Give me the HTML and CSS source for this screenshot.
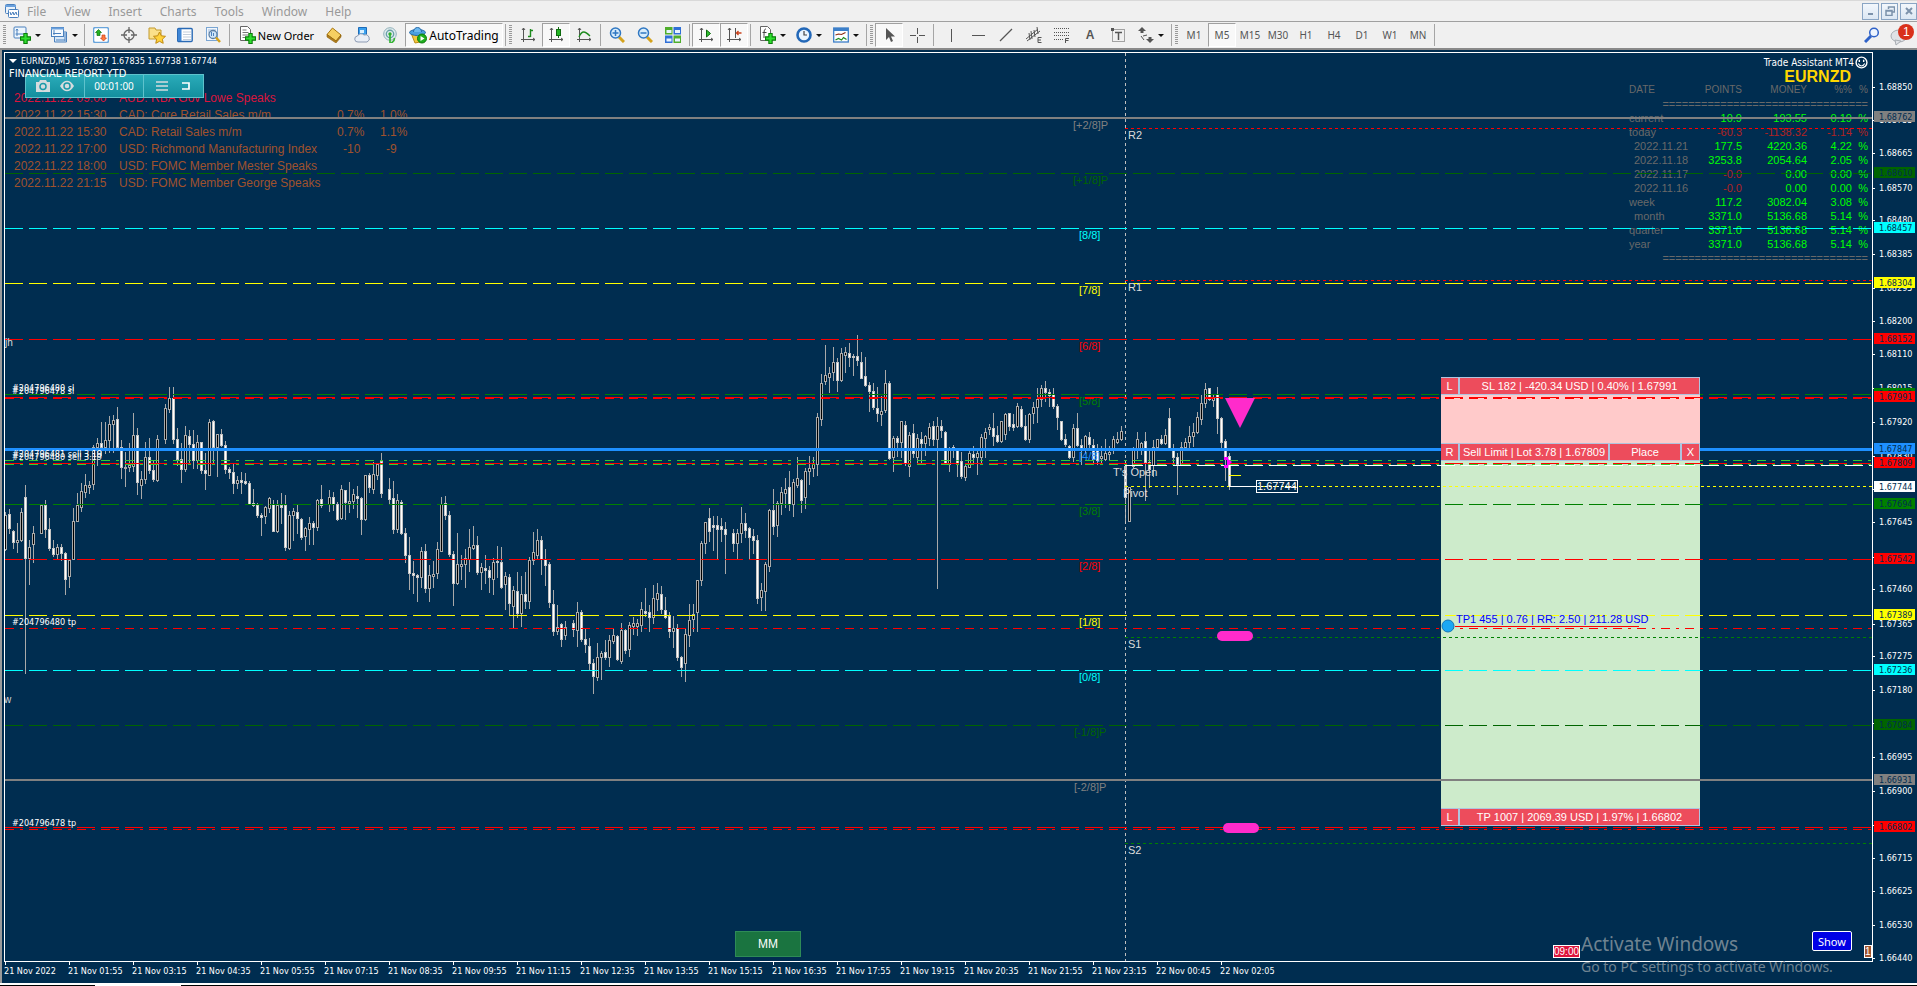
FILE: index.html
```html
<!DOCTYPE html>
<html lang="en">
<head>
<meta charset="utf-8">
<title>EURNZD,M5</title>
<link rel="stylesheet" href="styles.css">
</head>
<body>
<svg class="defs" aria-hidden="true">
  <symbol id="plus" viewBox="0 0 10 10"><path d="M3.5.5h3v3h3v3h-3v3h-3v-3h-3v-3h3z" fill="#2fe02f" stroke="#0a7d0a"/></symbol>
  <symbol id="i-app" viewBox="0 0 16 16"><rect x="1.500" y="1.500" width="10" height="9" rx="1" fill="#e9f2fb" stroke="#4a80bd"/><path d="M1 3h11" stroke="#6aa0dc" stroke-width="2"/><rect x="4.500" y="6.500" width="10" height="8" rx="1" fill="#fff" stroke="#4a80bd"/><path d="M6 9l1 3 2-3 1 3 2-3 1 3" fill="none" stroke="#4a80bd"/></symbol>
  <symbol id="i-newchart" viewBox="0 0 18 18"><rect x="1" y="1" width="12" height="11" rx="1" fill="#eef6fd" stroke="#4a80bd"/><path d="M4 3v7M2.500 8h8M3 4.500l1-1.500 1 1.500" fill="none" stroke="#4a80bd"/><use href="#plus" x="7" y="7" width="11" height="11"/></symbol>
  <symbol id="i-profile" viewBox="0 0 18 18"><path d="M4.500 6h12v10h-12z" fill="#d8e8f8" stroke="#4a80bd"/><path d="M15 7v8M6 14h9" stroke="#4a80bd"/><rect x="1.500" y="1.500" width="12" height="9" fill="#f5faff" stroke="#4a80bd"/><path d="M1 2.500h13" stroke="#6aa0dc" stroke-width="2"/><path d="M4 4v5M3 7.500h8" stroke="#4a80bd"/></symbol>
  <symbol id="i-market" viewBox="0 0 16 16"><rect x=".5" y=".5" width="15" height="15" rx="2" fill="#fff" stroke="#69a5dc" stroke-width="1.500"/><path d="M5.500 2.500l3 3H7v3H4v-3H2.500z" fill="#23b223" stroke="#0f730f" stroke-width=".7"/><path d="M10.500 14l3-3H12V8H9v3H7.500z" fill="#ff7a3c" stroke="#c9401a" stroke-width=".7"/></symbol>
  <symbol id="i-target" viewBox="0 0 16 16"><circle cx="8" cy="8" r="5" fill="none" stroke="#666" stroke-width="1.300"/><path d="M8 0v6M8 10v6M0 8h6M10 8h6" stroke="#666" stroke-width="1.300"/></symbol>
  <symbol id="i-folder" viewBox="0 0 18 18"><path d="M1 2h6l1 2h5v9H1z" fill="#fbe08a" stroke="#c29a2e"/><path d="M11.500 6l1.800 3.800 4.200.5-3.100 2.900.8 4.100-3.700-2-3.700 2 .8-4.100-3.100-2.900 4.200-.5z" fill="#ffd23c" stroke="#c08a12"/></symbol>
  <symbol id="i-list" viewBox="0 0 16 16"><rect x=".7" y="1.500" width="14.500" height="13" rx="1" fill="#fff" stroke="#2a6ab5" stroke-width="1.400"/><path d="M1 2h3.500v12H1z" fill="#3f86d6"/><path d="M6 5h8M6 7.500h8M6 10h8M6 12.500h8" stroke="#c3cedb"/></symbol>
  <symbol id="i-tester" viewBox="0 0 16 16"><rect x="1.500" y=".5" width="11" height="13" fill="#f2f7fc" stroke="#7aa5d2"/><path d="M3 3h8M3 5h8" stroke="#9dbbe0"/><circle cx="8" cy="7.500" r="4" fill="#cfe6fa" stroke="#5c7fa5" stroke-width="1.300"/><path d="M6.500 5v4M8.500 6v3" stroke="#4a80bd"/><path d="M11 10.500l4 4.500" stroke="#d4a21c" stroke-width="2.500"/></symbol>
  <symbol id="i-order" viewBox="0 0 18 18"><path d="M2.500.5h7l3 3v11h-10z" fill="#fff" stroke="#666"/><path d="M4.500 4h4M4.500 6.500h6M4.500 9h6M4.500 11.500h3" stroke="#777"/><use href="#plus" x="7" y="7" width="11" height="11"/></symbol>
  <symbol id="i-book" viewBox="0 0 16 16"><path d="M1 7.500L6.500 1 15 8l-5 6z" fill="#f6cf62" stroke="#a8760f"/><path d="M1 7.500v2.500l9 6 5-6V8l-5 6z" fill="#b37f1a" stroke="#8b5f0d" stroke-width=".6"/></symbol>
  <symbol id="i-cloud" viewBox="0 0 16 16"><path d="M4.500.5h8v8h-8z" fill="#3aa0ee" stroke="#1d6bb8"/><path d="M6 3h4v3H6z" fill="#d7efff"/><path d="M4 15a3 3 0 0 1-.5-6A4 4 0 0 1 10 8a3.500 3.500 0 0 1 3 7z" fill="#e9eef6" stroke="#8d9bb3"/></symbol>
  <symbol id="i-signal" viewBox="0 0 16 16"><circle cx="8" cy="7" r="6.300" fill="#e2ecef" stroke="#8fb0b9"/><circle cx="8" cy="7" r="3.700" fill="none" stroke="#69a0a8" stroke-width="1.400"/><circle cx="8" cy="7" r="1.700" fill="#2fae2f"/><path d="M8 8v8c3-.5 4.500-3 4.500-5" fill="none" stroke="#37b337" stroke-width="1.700"/></symbol>
  <symbol id="i-auto" viewBox="0 0 18 18"><path d="M2 7h13l-4 9-5 1z" fill="#f2c63c" stroke="#b98a16"/><ellipse cx="8.500" cy="6.500" rx="8" ry="3" fill="#4a9fe0" stroke="#2369a8"/><path d="M4.500 6c0-6 8-6 8 0" fill="#6bb8f0" stroke="#2369a8"/><circle cx="13" cy="12.500" r="4.500" fill="#1fae1f" stroke="#0b7a0b"/><path d="M11.500 10v5l4-2.500z" fill="#fff"/></symbol>
  <symbol id="i-bars" viewBox="0 0 16 16"><path d="M3.500 1v14M1 12.500h14M2 3l1.500-2L5 3M13 11l2 1.500-2 1.500" fill="none" stroke="#555"/><path d="M10.500 2v8M8 9.500h2.500M10.500 3.500H13" stroke="#1d8a1d" stroke-width="1.400"/></symbol>
  <symbol id="i-candles" viewBox="0 0 16 16"><path d="M3.500 1v14M1 12.500h14M2 3l1.500-2L5 3M13 11l2 1.500-2 1.500" fill="none" stroke="#555"/><path d="M10.500 0v11" stroke="#0e6a0e"/><rect x="8.500" y="2.500" width="4" height="6" fill="#22b422" stroke="#0e6a0e"/></symbol>
  <symbol id="i-line" viewBox="0 0 16 16"><path d="M3.500 1v14M1 12.500h14M2 3l1.500-2L5 3M13 11l2 1.500-2 1.500" fill="none" stroke="#555"/><path d="M3 10c3-7 6-6 11-1" fill="none" stroke="#1d8a1d" stroke-width="1.300"/></symbol>
  <symbol id="i-zin" viewBox="0 0 16 16"><path d="M10 10l5 5" stroke="#d4a21c" stroke-width="3"/><circle cx="6.500" cy="6" r="5" fill="#d9edfb" stroke="#2f77c2" stroke-width="1.500"/><path d="M6.500 3v6M3.500 6h6" stroke="#2f77c2" stroke-width="1.500"/></symbol>
  <symbol id="i-zout" viewBox="0 0 16 16"><path d="M10 10l5 5" stroke="#d4a21c" stroke-width="3"/><circle cx="6.500" cy="6" r="5" fill="#d9edfb" stroke="#2f77c2" stroke-width="1.500"/><path d="M3.500 6h6" stroke="#2f77c2" stroke-width="1.500"/></symbol>
  <symbol id="i-tiles" viewBox="0 0 16 16"><path d="M0 0h7.500v7.500H0zM8.500 8.500H16V16H8.500z" fill="#4fae2c"/><path d="M8.500 0H16v7.500H8.500zM0 8.500h7.500V16H0z" fill="#2f6fd6"/><path d="M1.500 3h5v3h-5zM10 3h5v3h-5zM1.500 11.500h5v3h-5zM10 11.500h5v3h-5z" fill="#e8f3ff"/></symbol>
  <symbol id="i-scroll" viewBox="0 0 16 16"><path d="M3.500 1v14M1 12.500h14M2 3l1.500-2L5 3M13 11l2 1.500-2 1.500" fill="none" stroke="#555"/><path d="M8.500 3v7l4-3.500z" fill="#2fc02f" stroke="#0e6a0e"/></symbol>
  <symbol id="i-shift" viewBox="0 0 16 16"><path d="M3.500 1v14M1 12.500h14M2 3l1.500-2L5 3M13 11l2 1.500-2 1.500M9.500 1v10" fill="none" stroke="#555"/><path d="M10.500 6h5M12.500 4l-2 2 2 2" fill="none" stroke="#c9401a" stroke-width="1.300"/></symbol>
  <symbol id="i-indic" viewBox="0 0 18 18"><path d="M2.500.5h7l3 3v11h-10z" fill="#fff" stroke="#666"/><path d="M8 3c-2 0-2 2-2 9M4.500 6.500h4" fill="none" stroke="#444"/><use href="#plus" x="7" y="7" width="11" height="11"/></symbol>
  <symbol id="i-clock" viewBox="0 0 16 16"><circle cx="8" cy="8" r="6.500" fill="#eaf5ff" stroke="#2368b8" stroke-width="2.600"/><path d="M8 4v4h3" fill="none" stroke="#444" stroke-width="1.200"/></symbol>
  <symbol id="i-templ" viewBox="0 0 16 16"><rect x=".7" y="1" width="14.600" height="14" fill="#fff" stroke="#3c7fc9" stroke-width="1.300"/><path d="M1 2.500h14" stroke="#3c7fc9" stroke-width="3"/><path d="M2.500 8l3-1 3 .500 4-2" fill="none" stroke="#8a2b12" stroke-width="1.200"/><path d="M2.500 13l3-1.500 3 1.500 2-2.500 3 2" fill="none" stroke="#1d8a1d" stroke-width="1.200"/></symbol>
  <symbol id="i-cursor" viewBox="0 0 16 16"><path d="M5 1v12l3-3 2 5 2-1-2-4.500h4z" fill="#555"/></symbol>
  <symbol id="i-cross" viewBox="0 0 16 16"><path d="M8.500 1v6M8.500 10v6M1 8.500h6M10 8.500h6" stroke="#555"/></symbol>
  <symbol id="i-v" viewBox="0 0 16 16"><path d="M9.500 2v13" stroke="#555"/></symbol>
  <symbol id="i-h" viewBox="0 0 16 16"><path d="M2 8.500h13" stroke="#555"/></symbol>
  <symbol id="i-trend" viewBox="0 0 16 16"><path d="M2 14L14 2" stroke="#555" stroke-width="1.200"/></symbol>
  <symbol id="i-chan" viewBox="0 0 16 16"><path d="M0 12L12 2M1 14L14 4M3 6l1 7M5 4l1 8M8 3l1 7M11 0l1 7" stroke="#555"/><path d="M15.500 10.500h-3.500v5h3.500M12 13h3" fill="none" stroke="#555"/></symbol>
  <symbol id="i-fibo" viewBox="0 0 16 16"><path d="M0 1.500h15M0 5.500h15M0 8.500h15M0 12.500h9" stroke="#555" stroke-dasharray="1 1"/><path d="M11.500 16v-4.500H15M11.500 13.500h3" fill="none" stroke="#555"/></symbol>
  <symbol id="i-box" viewBox="0 0 16 16"><rect x="2.500" y="2.500" width="12" height="12" fill="none" stroke="#555" stroke-dasharray="1 1"/><path d="M5 5.500h7M8.500 5.500V13" stroke="#555" stroke-width="1.500"/><path d="M1 1h3v3H1z" fill="#555"/></symbol>
  <symbol id="i-arrows" viewBox="0 0 16 16"><path d="M4 0l4 4H5.500v2h-3V4H0zM12 16l-4-4h2.500v-2h3v2H16z" fill="#555"/><path d="M3 9l3 4M5 9l4-1" stroke="#555"/></symbol>
  <symbol id="i-search" viewBox="0 0 16 16"><path d="M7 9l-6 6" stroke="#2f62c8" stroke-width="3"/><circle cx="10" cy="5.500" r="4.300" fill="#eef5ff" stroke="#2f62c8" stroke-width="1.500"/></symbol>
</svg>

<header class="top">
  <nav class="menubar">
    <svg class="ico"><use href="#i-app"/></svg>
    <a href="#file">File</a><a href="#view">View</a><a href="#insert">Insert</a><a href="#charts">Charts</a><a href="#tools">Tools</a><a href="#window">Window</a><a href="#help">Help</a>
    <div class="winbtns">
      <button aria-label="Minimize"><svg viewBox="0 0 10 10"><path d="M2 8h5" stroke="#7c92ab" stroke-width="2"/></svg></button>
      <button aria-label="Restore"><svg viewBox="0 0 10 10"><path d="M3.500 3V1h6v5h-2M1 4.500h6v5H1zM1 5h6" fill="none" stroke="#7c92ab" stroke-width="1.500"/></svg></button>
      <button aria-label="Close"><svg viewBox="0 0 10 10"><path d="M2 2l6 6M8 2L2 8" stroke="#7c92ab" stroke-width="2"/></svg></button>
    </div>
  </nav>
  <div class="toolbar">
    <i class="grip"></i>
    <button class="tb drop" aria-label="New chart"><svg class="ico big"><use href="#i-newchart"/></svg></button>
    <button class="tb drop" aria-label="Profiles"><svg class="ico big"><use href="#i-profile"/></svg></button>
    <i class="sep"></i>
    <button class="tb" aria-label="Market watch"><svg class="ico"><use href="#i-market"/></svg></button>
    <button class="tb" aria-label="Data window"><svg class="ico"><use href="#i-target"/></svg></button>
    <button class="tb" aria-label="Navigator"><svg class="ico big"><use href="#i-folder"/></svg></button>
    <button class="tb" aria-label="Terminal"><svg class="ico"><use href="#i-list"/></svg></button>
    <button class="tb" aria-label="Strategy tester"><svg class="ico"><use href="#i-tester"/></svg></button>
    <i class="sep"></i>
    <button class="tb text"><svg class="ico big"><use href="#i-order"/></svg>New Order</button>
    <button class="tb" aria-label="MetaEditor"><svg class="ico"><use href="#i-book"/></svg></button>
    <button class="tb" aria-label="Cloud"><svg class="ico"><use href="#i-cloud"/></svg></button>
    <button class="tb" aria-label="Signals"><svg class="ico"><use href="#i-signal"/></svg></button>
    <button class="tb text auto on"><svg class="ico big"><use href="#i-auto"/></svg>AutoTrading</button>
    <i class="sep"></i><i class="grip"></i>
    <button class="tb" aria-label="Bar chart"><svg class="ico"><use href="#i-bars"/></svg></button>
    <button class="tb on" aria-label="Candlesticks"><svg class="ico"><use href="#i-candles"/></svg></button>
    <button class="tb" aria-label="Line chart"><svg class="ico"><use href="#i-line"/></svg></button>
    <i class="sep"></i>
    <button class="tb" aria-label="Zoom in"><svg class="ico"><use href="#i-zin"/></svg></button>
    <button class="tb" aria-label="Zoom out"><svg class="ico"><use href="#i-zout"/></svg></button>
    <button class="tb" aria-label="Tile windows"><svg class="ico"><use href="#i-tiles"/></svg></button>
    <i class="sep"></i>
    <button class="tb on" aria-label="Auto scroll"><svg class="ico"><use href="#i-scroll"/></svg></button>
    <button class="tb on" aria-label="Chart shift"><svg class="ico"><use href="#i-shift"/></svg></button>
    <i class="sep"></i>
    <button class="tb drop" aria-label="Indicators"><svg class="ico big"><use href="#i-indic"/></svg></button>
    <button class="tb drop" aria-label="Periods"><svg class="ico"><use href="#i-clock"/></svg></button>
    <button class="tb drop" aria-label="Templates"><svg class="ico"><use href="#i-templ"/></svg></button>
    <i class="sep"></i><i class="grip"></i>
    <button class="tb on" aria-label="Cursor"><svg class="ico"><use href="#i-cursor"/></svg></button>
    <button class="tb" aria-label="Crosshair"><svg class="ico"><use href="#i-cross"/></svg></button>
    <i class="sep"></i>
    <button class="tb" aria-label="Vertical line"><svg class="ico"><use href="#i-v"/></svg></button>
    <button class="tb" aria-label="Horizontal line"><svg class="ico"><use href="#i-h"/></svg></button>
    <button class="tb" aria-label="Trendline"><svg class="ico"><use href="#i-trend"/></svg></button>
    <button class="tb" aria-label="Equidistant channel"><svg class="ico"><use href="#i-chan"/></svg></button>
    <button class="tb" aria-label="Fibonacci retracement"><svg class="ico"><use href="#i-fibo"/></svg></button>
    <button class="tb letter">A</button>
    <button class="tb" aria-label="Text label"><svg class="ico"><use href="#i-box"/></svg></button>
    <button class="tb drop" aria-label="Arrows"><svg class="ico"><use href="#i-arrows"/></svg></button>
    <i class="sep"></i><i class="grip"></i>
    <button class="tb tf">M1</button><button class="tb tf on">M5</button><button class="tb tf">M15</button><button class="tb tf">M30</button><button class="tb tf">H1</button><button class="tb tf">H4</button><button class="tb tf">D1</button><button class="tb tf">W1</button><button class="tb tf">MN</button>
    <i class="sep"></i>
    <div class="tools-right">
      <button class="tb" aria-label="Search"><svg class="ico"><use href="#i-search"/></svg></button>
      <button class="chat" aria-label="Notifications"><svg viewBox="0 0 24 22"><ellipse cx="9" cy="12" rx="8" ry="6" fill="#dfe2e6" stroke="#a8adb3"/><path d="M5 16l1 5 5-4z" fill="#dfe2e6" stroke="#a8adb3"/><circle cx="16" cy="8" r="8" fill="#d9301a"/></svg><span>1</span></button>
    </div>
  </div>
</header>

<main class="chart">
  <section class="plot">
    <div class="zone"><div class="risk"></div><div class="reward"></div></div>

    <div class="news">
      <div class="hot"><span>2022.11.22 09:00</span><span>AUD: RBA Gov Lowe Speaks</span></div>
      <div><span>2022.11.22 15:30</span><span>CAD: Core Retail Sales m/m</span><span>0.7%</span><span>1.0%</span></div>
      <div><span>2022.11.22 15:30</span><span>CAD: Retail Sales m/m</span><span>0.7%</span><span>1.1%</span></div>
      <div><span>2022.11.22 17:00</span><span>USD: Richmond Manufacturing Index</span><span class="mid">-10</span><span class="mid">-9</span></div>
      <div><span>2022.11.22 18:00</span><span>USD: FOMC Member Mester Speaks</span></div>
      <div><span>2022.11.22 21:15</span><span>USD: FOMC Member George Speaks</span></div>
    </div>

    <div class="report">
      <div class="expert">Trade Assistant MT4<svg viewBox="0 0 12 12"><circle cx="6" cy="6" r="5" fill="none" stroke="#fff" stroke-width="1.300"/><path d="M3 7c1.500 3 4.500 3 6 0" fill="none" stroke="#fff"/><path d="M4 3.500v2M8 3.500v2" stroke="#fff" stroke-width="1.300"/></svg></div>
      <div class="symbol">EURNZD</div>
      <table>
        <thead><tr><th>DATE</th><th>POINTS</th><th>MONEY</th><th>%%</th><th>%</th></tr></thead>
        <tbody>
          <tr><td colspan="5" class="rule">================================</td></tr>
          <tr><th>current</th><td>10.9</td><td>193.55</td><td>0.19</td><td>%</td></tr>
          <tr class="loss"><th>today</th><td>-60.3</td><td>-1138.32</td><td>-1.14</td><td>%</td></tr>
          <tr><th class="in">2022.11.21</th><td>177.5</td><td>4220.36</td><td>4.22</td><td>%</td></tr>
          <tr><th class="in">2022.11.18</th><td>3253.8</td><td>2054.64</td><td>2.05</td><td>%</td></tr>
          <tr><th class="in">2022.11.17</th><td class="neg">-0.0</td><td>0.00</td><td>0.00</td><td>%</td></tr>
          <tr><th class="in">2022.11.16</th><td class="neg">-0.0</td><td>0.00</td><td>0.00</td><td>%</td></tr>
          <tr><th>week</th><td>117.2</td><td>3082.04</td><td>3.08</td><td>%</td></tr>
          <tr><th class="in">month</th><td>3371.0</td><td>5136.68</td><td>5.14</td><td>%</td></tr>
          <tr><th>quarter</th><td>3371.0</td><td>5136.68</td><td>5.14</td><td>%</td></tr>
          <tr><th>year</th><td>3371.0</td><td>5136.68</td><td>5.14</td><td>%</td></tr>
          <tr><td colspan="5" class="rule">================================</td></tr>
        </tbody>
      </table>
    </div>

    <svg class="canvas" id="canvas"></svg>

    <div class="timer">
      <div class="cell icons">
        <svg viewBox="0 0 16 14"><path d="M1 3h3l1-2h6l1 2h3v10H1z" fill="#d5dcde"/><circle cx="8" cy="7.500" r="3" fill="none" stroke="#1b9aa9" stroke-width="1.500"/></svg>
        <svg viewBox="0 0 16 14"><path d="M1 7c4-7 10-7 14 0-4 7-10 7-14 0z" fill="#d5dcde"/><circle cx="8" cy="7" r="3" fill="#d5dcde" stroke="#1b9aa9" stroke-width="1.500"/></svg>
      </div>
      <div class="cell clock">00:01:00</div>
      <div class="cell icons">
        <svg viewBox="0 0 16 14"><path d="M2 3h12M2 7h12M2 11h12" stroke="#d5dcde" stroke-width="1.500"/></svg>
        <svg viewBox="0 0 16 14"><path d="M4 4h7v6H4" fill="none" stroke="#fff" stroke-width="1.700"/></svg>
      </div>
    </div>
    <div class="heading">
      <div><svg viewBox="0 0 8 6"><path d="M0 1h8L4 5z" fill="#fff"/></svg>EURNZD,M5&nbsp; 1.67827 1.67835 1.67738 1.67744</div>
      <div class="ytd">FINANCIAL REPORT YTD</div>
    </div>

    <div class="order sl"><button>L</button><button class="wide">SL 182 | -420.34 USD | 0.40% | 1.67991</button></div>
    <div class="order entry"><button>R</button><button class="wide">Sell Limit | Lot 3.78 | 1.67809</button><button class="place">Place</button><button>X</button></div>
    <div class="order tp"><button>L</button><button class="wide">TP 1007 | 2069.39 USD | 1.97% | 1.66802</button></div>

    <button class="mm">MM</button>
    <button class="show">Show</button>
    <span class="event">09:00</span>
    <span class="event next">1</span>
    <div class="activate"><strong>Activate Windows</strong><span>Go to PC settings to activate Windows.</span></div>
  </section>
  <svg class="prices" id="prices"></svg>
  <div class="times" id="times"></div>
</main>
<footer class="strip"><i></i></footer>
<script src="chart.js"></script>
</body>
</html>
```
FILE: styles.css
```css
* { box-sizing: border-box; }
html, body { height: 100%; }
body {
  margin: 0;
  display: flex;
  flex-direction: column;
  overflow: hidden;
  background: #002d50;
  font-family: "Liberation Sans", Arial, sans-serif;
  font-size: 11px;
  color: #fff;
}
button { font: inherit; color: inherit; padding: 0; margin: 0; border: 0; background: none; }
.defs { position: absolute; width: 0; height: 0; }
.ico { width: 16px; height: 16px; flex: none; }
.ico.big { width: 18px; height: 18px; }

/* menu and toolbar */
.top { flex: none; background: #f0f0f0; border-top: 1px solid #d9d9d9; border-bottom: 2px solid #8a8a8a; }
.menubar {
  display: flex;
  align-items: center;
  height: 21px;
  padding-left: 4px;
  gap: 18px;
  border-bottom: 1px solid #a0a0a0;
  font: 12px "Noto Sans", sans-serif;
}
.menubar .ico { margin-right: -11px; }
.menubar a { color: #999; text-decoration: none; }
.winbtns { margin-left: auto; display: flex; gap: 2px; }
.winbtns button {
  width: 17px; height: 17px;
  display: grid; place-items: center;
  border: 1px solid #8aa5c4;
  background: linear-gradient(#f2f7fc, #dce7f3);
}
.winbtns svg { width: 10px; height: 10px; }
.toolbar { display: flex; align-items: center; height: 26px; padding-left: 2px; }
.grip { width: 3px; height: 20px; margin-right: 2px; margin-left: 1px; background: repeating-linear-gradient(#999 0 1px, #f0f0f0 1px 2px); }
.sep { width: 1px; height: 22px; margin: 0 2px; background: #a5a5a5; }
.tb {
  width: 28px; height: 24px;
  display: flex; align-items: center; justify-content: center;
  color: #555;
}
.tb.drop { width: 37px; gap: 4px; }
.tb.drop::after { content: ""; border: 3px solid transparent; border-top-color: #111; border-bottom: 0; }
.tb.on { background: #f8f8f8; border: 1px solid #a0a0a0; border-right-color: #fff; border-bottom-color: #fff; }
.tb.text { width: 88px; gap: 2px; color: #000; font: 11px "Noto Sans", sans-serif; white-space: nowrap; }
.tb.auto { width: 98px; margin-left: 1px; font-size: 12px; }
.tb.tf { font: 10px "Noto Sans", sans-serif; }
.tb.letter { font: bold 12px "Liberation Sans", sans-serif; }
.tools-right { margin-left: auto; display: flex; align-items: center; gap: 4px; }
.chat { position: relative; width: 27px; height: 22px; }
.chat svg { width: 24px; height: 22px; display: block; }
.chat span { position: absolute; top: 1px; left: 13px; font-size: 12px; }

/* chart frame */
.chart {
  flex: 1;
  min-height: 0;
  display: grid;
  grid-template-columns: minmax(0, 1fr) 44px;
  grid-template-rows: minmax(0, 1fr) 21px;
  padding-top: 2px;
  padding-left: 2px;
  border-left: 2px solid #9a9a9a;
}
.plot { position: relative; border: 1px solid #fff; }
.canvas { position: absolute; inset: 0; width: 100%; height: 100%; }
.prices { width: 100%; height: 100%; overflow: visible; }
.times { grid-column: 1 / -1; display: flex; overflow: hidden; }
.times span { position: relative; flex: none; width: 64px; padding-top: 3px; line-height: 12px; white-space: nowrap; }
.times span::before { content: ""; position: absolute; left: 1px; top: 0; width: 1px; height: 3px; background: #fff; }
.times, .prices, .heading, .expert, .small { font-family: "DejaVu Sans Condensed", "Noto Sans", sans-serif; font-size: 9px; }
.strip { flex: none; height: 3px; background: #000; border-top: 2px solid #fff; padding-left: 95px; }
.strip i { display: block; width: 86px; height: 1px; background: #fff; }

/* texts on the chart */
.heading { position: absolute; left: 4px; top: 1px; white-space: nowrap; }
.heading div { display: flex; align-items: center; gap: 4px; height: 13px; }
.heading svg { width: 8px; height: 6px; }
.heading .ytd { font-size: 11px; }
.timer {
  position: absolute; left: 20px; top: 21px;
  display: flex; height: 24px;
  border: 1px solid #5ec2cc;
  background: linear-gradient(#2aabb9, #138f9e);
}
.cell { width: 59px; display: flex; align-items: center; justify-content: center; gap: 8px; border-right: 1px solid #5ec2cc; }
.cell:last-child { border-right: 0; }
.cell svg { width: 16px; height: 14px; }
.clock { font: 10px "Noto Sans", sans-serif; }
.news { position: absolute; left: 9px; top: 37px; font-size: 12px; line-height: 17px; color: #a0522d; }
.news div { display: grid; grid-template-columns: 105px 218px 43px 40px; white-space: nowrap; }
.news .hot { color: #dc143c; }
.news .mid { padding-left: 6px; }

.report { position: absolute; right: 4px; top: 2px; display: flex; flex-direction: column; align-items: flex-end; }
.expert { display: flex; align-items: center; gap: 1px; height: 14px; font-size: 10px; }
.expert svg { width: 13px; height: 13px; }
.symbol { font-weight: bold; font-size: 16px; line-height: 16px; height: 14px; margin-right: 17px; color: #ffd700; }
.report table { width: 239px; table-layout: fixed; border-collapse: collapse; color: #0f0; }
.report tr { height: 14px; }
.report th, .report td { padding: 0; line-height: 14px; text-align: right; font-weight: normal; white-space: nowrap; }
.report th { color: #696969; }
.report thead th { font-size: 10px; }
.report th:first-child { width: 64px; text-align: left; }
.report th:first-child.in { padding-left: 5px; }
.report th:nth-child(2) { width: 49px; }
.report th:nth-child(3) { width: 65px; }
.report th:nth-child(4) { width: 45px; }
.report .rule { color: #696969; }
.report .loss td, .report .neg { color: #b22222; }

/* order panel */
.zone { position: absolute; left: 1436px; top: 324px; width: 259px; }
.risk { height: 66px; background: #ffcaca; }
.reward { height: 374px; background: #cdebcb; }
.order { position: absolute; left: 1436px; width: 259px; height: 18px; display: flex; gap: 2px; padding: 1px 1px 1px 0; background: #b0c4de; }
.order button { width: 17px; background: #ed4c5c; white-space: nowrap; }
.order .wide { flex: 1; }
.order .place { width: 70px; }
.order.sl { top: 324px; }
.order.entry { top: 390px; }
.order.tp { top: 755px; }

.mm { position: absolute; left: 730px; bottom: 4px; width: 66px; height: 26px; background: #1a7440; border: 1px solid #2e8b57; font-size: 12px; }
.show { position: absolute; right: 20px; bottom: 10px; width: 40px; height: 20px; background: #0000e6; border: 1px solid #fff; border-radius: 2px; font-family: "Noto Sans", sans-serif; }
.event { position: absolute; left: 1548px; bottom: 3px; height: 13px; line-height: 11px; border: 1px solid #fff; background: #dc143c; font-size: 10px; }
.event.next { left: auto; right: 0; width: 8px; background: #a0522d; }
.activate { position: absolute; right: 35px; bottom: -16px; color: #6f8391; font-family: "Noto Sans", sans-serif; display: flex; flex-direction: column; width: 256px; white-space: nowrap; }
.activate strong { font-weight: normal; font-size: 19px; line-height: 25px; }
.activate span { font-size: 14px; line-height: 20px; }
```
FILE: chart.js
```js
const NS = "http://www.w3.org/2000/svg";
const canvas = document.getElementById("canvas");
const prices = document.getElementById("prices");
const times = document.getElementById("times");

function add(parent, tag, attrs, text) {
  const el = document.createElementNS(NS, tag);
  for (const key in attrs) el.setAttribute(key, attrs[key]);
  if (text) el.textContent = text;
  parent.appendChild(el);
  return el;
}

const LEFT = 5, TOP = 53;
const DASH = "18 6", DASHDOT = "9 6 3 6", DOT = "3 3";

function hline(y, color, dash, width, from, to) {
  const a = { x1: from ? from - LEFT : 0, x2: to ? to - LEFT : "100%", y1: y - TOP + 0.5, y2: y - TOP + 0.5, stroke: color, "stroke-width": width || 1, "shape-rendering": "crispEdges" };
  if (dash) a["stroke-dasharray"] = dash;
  add(canvas, "line", a);
}
function label(x, y, text, color, size, small) {
  const a = { x: x - LEFT, y: y - TOP + (small ? 3 : 4), fill: color || "#dcdcdc", "font-size": size || 11 };
  if (small) a.class = "small";
  add(canvas, "text", a, text);
}

/* candles: high/top/bottom/low, h = hollow, w = filled, "-" = no bar */
const BARS = `
192/195/229/230h 189/194/208/213w 210/211/222/228w 203/220/222/232h 188/192/220/221h 165/177/238/353w 220/227/238/264h 206/213/224/242h - 184/185/213/213h
180/185/209/217w 198/209/228/230w 220/228/234/236w 224/227/234/239h 224/227/233/240w 232/233/259/274w 239/240/256/267h 188/201/239/239h 173/185/201/201h 163/171/187/191h
154/165/172/177h 161/165/167/173h 125/127/164/169h 118/123/127/145h 102/123/127/135w 102/120/127/133h 96/104/120/132h 95/100/104/132h 87/99/127/128w 120/127/147/158w
132/147/148/166h 123/145/147/151h 93/115/146/151h 108/115/162/174w 151/159/165/178h 122/137/159/163h 118/137/150/153w 140/150/159/161w 115/119/160/161h -
84/88/119/123h 67/78/89/92h 67/78/119/123w 108/119/139/145w 123/139/149/162w 106/115/149/151h 110/116/124/142w 110/124/140/148w 115/122/140/148h 122/122/150/153w
133/150/153/169w 99/102/155/155h 100/101/127/142w 114/114/127/156h 109/114/125/126w 121/125/149/153w 147/149/152/158w 143/152/163/173w 156/160/163/168h 152/160/162/173w
153/161/163/164w 161/163/184/184w 169/183/185/186w 183/185/195/197w 193/195/197/215w 186/187/196/203h 177/178/188/192h 180/184/211/211w 180/185/211/212h 173/185/187/203w
175/185/227/230w 191/195/228/229h 188/191/195/220h 185/192/198/213w 198/199/217/219w 207/208/216/230h 197/203/209/224h 201/203/207/224w 179/180/207/210h 165/179/185/187w
- 170/177/184/191h 172/177/184/190w 182/184/199/200w 165/169/198/199h 170/170/182/199w 162/181/183/192h 169/174/181/188h 166/176/178/197w 177/178/199/214w
155/155/199/200h 153/155/167/172w 142/154/169/173h 143/144/155/159h 133/141/173/177w - 158/169/179/183w 161/178/209/213w 174/180/209/212h 180/182/213/214w
208/213/235/242w 217/235/253/269w 241/253/255/273w 254/255/257/281w 227/231/257/267h 224/231/268/272w 245/255/268/281h 241/254/256/267h 222/229/253/258h 177/184/231/231h
176/183/195/199w 191/195/234/236w 231/234/263/285w 213/244/263/264h 235/244/246/259h 229/238/244/267h 209/227/239/251h 206/225/228/229h 216/225/252/254w 243/247/252/269h
235/248/250/263w 246/250/257/272w 238/242/259/274h 226/241/242/257w 227/242/267/268w 252/256/264/289h 254/257/283/295w 266/270/286/308h 252/271/293/297w 256/274/293/306h
252/274/281/288w 237/240/281/288h 212/232/240/244h 209/220/235/238h 216/220/239/254w 229/239/245/265w 242/244/282/287w 270/284/311/315w 285/307/311/314h 303/304/319/326w
301/307/315/319h - 300/303/309/316w 282/292/310/326h 290/292/319/321w 309/319/324/332w 318/326/343/350w 339/343/356/373w 323/337/357/360h 331/333/337/359h
320/332/337/339w 315/320/337/346h 309/315/321/323h 315/316/339/340w 303/310/341/343h 309/310/330/333w 302/305/329/336h 297/303/306/314h 299/303/306/315h 282/289/305/311h
268/291/293/296w 285/292/297/311w 265/278/297/303h 263/273/279/290h 266/274/289/293w 277/290/297/298w 292/296/311/317w 296/308/311/327h 304/308/337/340w 336/337/347/356w
308/314/343/361h 284/300/315/326h 284/294/299/311h 260/260/292/311h 221/223/260/265h 202/202/223/233h 188/198/211/221w 196/205/207/230w 196/205/209/238w 198/206/209/221w
202/209/214/253w - 209/213/223/231w 209/213/223/239h 187/203/213/222h 193/203/210/217w 207/208/217/239w 209/216/220/233w 215/220/278/283w 263/270/277/290h
242/244/271/290h 189/190/246/251h 169/190/206/214w 181/183/205/216h 167/172/183/194h 158/169/173/187h 151/167/184/190w 159/162/184/196h 137/158/165/167h 159/160/180/192w
148/151/177/188h 136/148/151/164h 137/144/148/156h 93/97/144/155h 54/63/99/105h 25/55/61/64h 47/53/57/72h 27/42/52/60h 38/42/60/71w 28/33/60/61h
27/32/35/52h 23/33/37/46w 34/36/37/55w 15/36/40/45w 32/42/58/58w 37/56/65/66w 62/65/71/91w 63/71/87/89w 67/88/93/101w 76/91/94/105h
50/63/90/92h 61/63/138/139w 116/118/137/151h 116/118/122/136w 101/101/122/137h 101/105/143/145w 112/115/146/156h 104/113/133/137w 114/118/137/144h 112/119/123/144w
115/116/123/135h 103/107/118/125h 101/106/119/125w 97/106/119/268h 100/106/110/117w 111/112/143/144w 127/128/144/151h 125/127/128/137w 130/130/143/156w 132/141/156/158w
144/146/157/160h 130/133/147/147h 126/134/137/142w 130/133/137/154h 114/117/137/143h 108/112/118/137h 104/107/109/114h 93/108/116/125w 106/115/121/122w 101/101/121/122h
93/94/114/119h 93/93/106/110w 94/104/107/110w 83/86/106/107h 86/89/106/107w 95/106/119/120w 93/94/119/122h 82/87/93/103h 68/79/87/102h 65/68/79/86h
61/68/72/81w 69/72/75/86w 68/74/86/88w 84/86/97/109w 101/101/119/120w 114/119/124/126w 125/126/137/138w 104/108/137/141h 93/108/125/126w 119/125/130/144w
115/116/130/133h 112/117/124/127w 119/125/139/142w 124/128/140/144w 126/136/138/144h 119/133/139/140h 126/132/134/139h 116/119/128/133h 112/119/122/123h 106/111/119/120h
144/146/177/201w 167/167/201/201h 127/128/146/147h 112/119/128/138h 122/123/128/134h 112/121/142/180w 130/142/149/167w 120/127/145/156h 119/119/127/128h 115/119/123/124w
109/115/123/124h 88/98/129/130w 124/129/137/143w 133/137/144/174w 122/127/144/145h 118/122/127/128h 106/116/122/127h 103/112/116/126h 92/97/112/113h 75/83/99/104h
63/69/83/87h 68/68/79/80w 74/78/80/86h 67/74/98/113w 97/98/122/127w 119/121/137/160w 133/136/166/169w`.trim().split(/\s+/);

const BAR_TOP = 267;
BARS.forEach((bar, i) => {
  if (bar === "-") return;
  const hollow = bar.endsWith("h");
  const [high, top, bottom, low] = bar.slice(0, -1).split("/").map(Number);
  const x = 4 * i, height = Math.max(bottom - top + 1, 1);
  add(canvas, "rect", { x, y: BAR_TOP + high, width: 1, height: low - high + 1, fill: "#a9a9a9" });
  add(canvas, "rect", { x: x - 1, y: BAR_TOP + top, width: 3, height, fill: hollow ? "#a9a9a9" : "#c4c4c4" });
  if (height > 2) add(canvas, "rect", { x, y: BAR_TOP + top + 1, width: 1, height: height - 2, fill: hollow ? "#000" : "#fff" });
});

add(canvas, "line", { x1: 1120.5, x2: 1120.5, y1: 0, y2: "100%", stroke: "#c0c0c0", "stroke-dasharray": DOT });

/* Murrey levels */
[
  [173, "#006400", "[+1/8]P", 1073], [228, "#00ffff", "[8/8]", 1079], [283, "#ffff00", "[7/8]", 1079],
  [339, "#ff0000", "[6/8]", 1079], [394, "#008000", "[5/8]", 1079], [504, "#008000", "[3/8]", 1079],
  [559, "#ff0000", "[2/8]", 1079], [615, "#ffff00", "[1/8]", 1079], [670, "#00ffff", "[0/8]", 1079],
  [725, "#006400", "[-1/8]P", 1074]
].forEach(([y, color, text, x]) => { hline(y, color, DASH); label(x, y + 7, text, color); });
label(1073, 125, "[+2/8]P", "#808080");
label(1079, 456, "[4/8]", "#1e90ff");
label(1074, 787, "[-2/8]P", "#808080");

/* orders */
hline(397, "#ff0000", DASH);
hline(398, "#ff0000", DASHDOT);
hline(460, "#32cd32", DASHDOT);
hline(464, "#32cd32", DASHDOT);
hline(463, "#ff0000", DASH);
hline(628, "#ff0000", DASHDOT);
hline(827, "#ff0000", DASH);
hline(829, "#ff0000", DASHDOT);

/* pivots */
hline(128, "#ff0000", DOT, 1, 1125);
hline(280, "#ff0000", DOT, 1, 1125);
hline(637, "#008000", DOT, 1, 1125);
hline(843, "#008000", DOT, 1, 1125);
hline(486, "#ffff00", DOT, 1, 1125);
hline(465, "#ffffff", DASH, 1, 1125);
label(1128, 135, "R2");
label(1128, 287, "R1");
label(1128, 644, "S1");
label(1128, 850, "S2");
label(1113, 472, "T's Open");
label(1123, 493, "Pivot");

hline(117, "#808080", null, 2);
hline(779, "#808080", null, 2);
hline(449, "#1e90ff", null, 3);

label(5, 342, "jh", "#dcdcdc", 10);
label(4, 699, "w", "#dcdcdc", 10);
label(12, 388, "#204796480 sl", "#fff", 9, true);
label(12, 391, "#204796478 sl", "#fff", 9, true);
label(12, 454, "#204796481 sell 3.19", "#fff", 9, true);
label(12, 457, "#204796480 sell 3.19", "#fff", 9, true);
label(12, 622, "#204796480 tp", "#fff", 9, true);
label(12, 823, "#204796478 tp", "#fff", 9, true);

/* last price */
hline(475, "#ffff00", null, 1, 1229, 1241);
hline(486, "#ffffff", null, 1, 1229, 1256);
add(canvas, "rect", { x: 1251.5, y: 427.5, width: 41, height: 12, fill: "none", stroke: "#fff" });
label(1257, 486, "1.67744", "#fff", 11);
hline(486, "#ffffff", "2 2", 1, 1257, 1297);

/* drawn marks */
add(canvas, "path", { d: "M1219 404h4v2l4 3-4 4v2h-4v-3h3v-5h-3z", fill: "#ff00ff" });
add(canvas, "path", { d: "M1220 345h30l-15 30z", fill: "#ff2bcb" });
add(canvas, "rect", { x: 1212, y: 578, width: 36, height: 10, rx: 5, fill: "#ff2bcb" });
add(canvas, "rect", { x: 1218, y: 770, width: 36, height: 10, rx: 5, fill: "#ff2bcb" });

/* partial target */
label(1456, 619, "TP1 455 | 0.76 | RR: 2.50 | 211.28 USD", "#0000ff");
hline(626, "#ff0000", null, 1, 1455, 1639);
add(canvas, "circle", { cx: 1443, cy: 573, r: 6, fill: "#1ba8f3", stroke: "#1573b5" });

/* price scale */
[
  [87, "1.68850"], [120, "1.68755"], [153, "1.68665"], [188, "1.68570"], [220, "1.68480"], [254, "1.68385"], [288, "1.68295"],
  [321, "1.68200"], [354, "1.68110"], [388, "1.68015"], [422, "1.67920"], [456, "1.67830"], [489, "1.67735"], [522, "1.67645"],
  [557, "1.67550"], [589, "1.67460"], [624, "1.67365"], [656, "1.67275"], [690, "1.67180"], [723, "1.67090"], [757, "1.66995"],
  [791, "1.66900"], [825, "1.66805"], [858, "1.66715"], [891, "1.66625"], [925, "1.66530"], [958, "1.66440"]
].forEach(([y, text]) => {
  add(prices, "rect", { x: 0, y: y - TOP + 1, width: 2, height: 1, fill: "#fff" });
  add(prices, "text", { x: 6, y: y - TOP + 4, fill: "#fff" }, text);
});
[
  [117, "1.68762", "#808080"], [173, "1.68610", "#006400"], [228, "1.68457", "#00ffff"], [283, "1.68304", "#ffff00"],
  [339, "1.68152", "#ff0000"], [394, "1.68000", "#008000"], [397, "1.67991", "#ff0000"], [449, "1.67847", "#1e90ff"],
  [463, "1.67809", "#ff0000"], [487, "1.67744", "#ffffff"], [504, "1.67694", "#008000"], [559, "1.67542", "#ff0000"],
  [615, "1.67389", "#ffff00"], [670, "1.67236", "#00ffff"], [725, "1.67084", "#006400"], [780, "1.66931", "#808080"],
  [827, "1.66802", "#ff0000"]
].forEach(([y, text, color]) => {
  add(prices, "rect", { x: 1, y: y - TOP - 5, width: 41, height: 11, fill: color });
  add(prices, "text", { x: 6, y: y - TOP + 4, fill: "#002d50" }, text);
});

/* time scale */
["21 Nov 2022", "21 Nov 01:55", "21 Nov 03:15", "21 Nov 04:35", "21 Nov 05:55", "21 Nov 07:15", "21 Nov 08:35", "21 Nov 09:55",
 "21 Nov 11:15", "21 Nov 12:35", "21 Nov 13:55", "21 Nov 15:15", "21 Nov 16:35", "21 Nov 17:55", "21 Nov 19:15", "21 Nov 20:35",
 "21 Nov 21:55", "21 Nov 23:15", "22 Nov 00:45", "22 Nov 02:05"].forEach(text => {
  const span = document.createElement("span");
  span.textContent = text;
  times.appendChild(span);
});
```
